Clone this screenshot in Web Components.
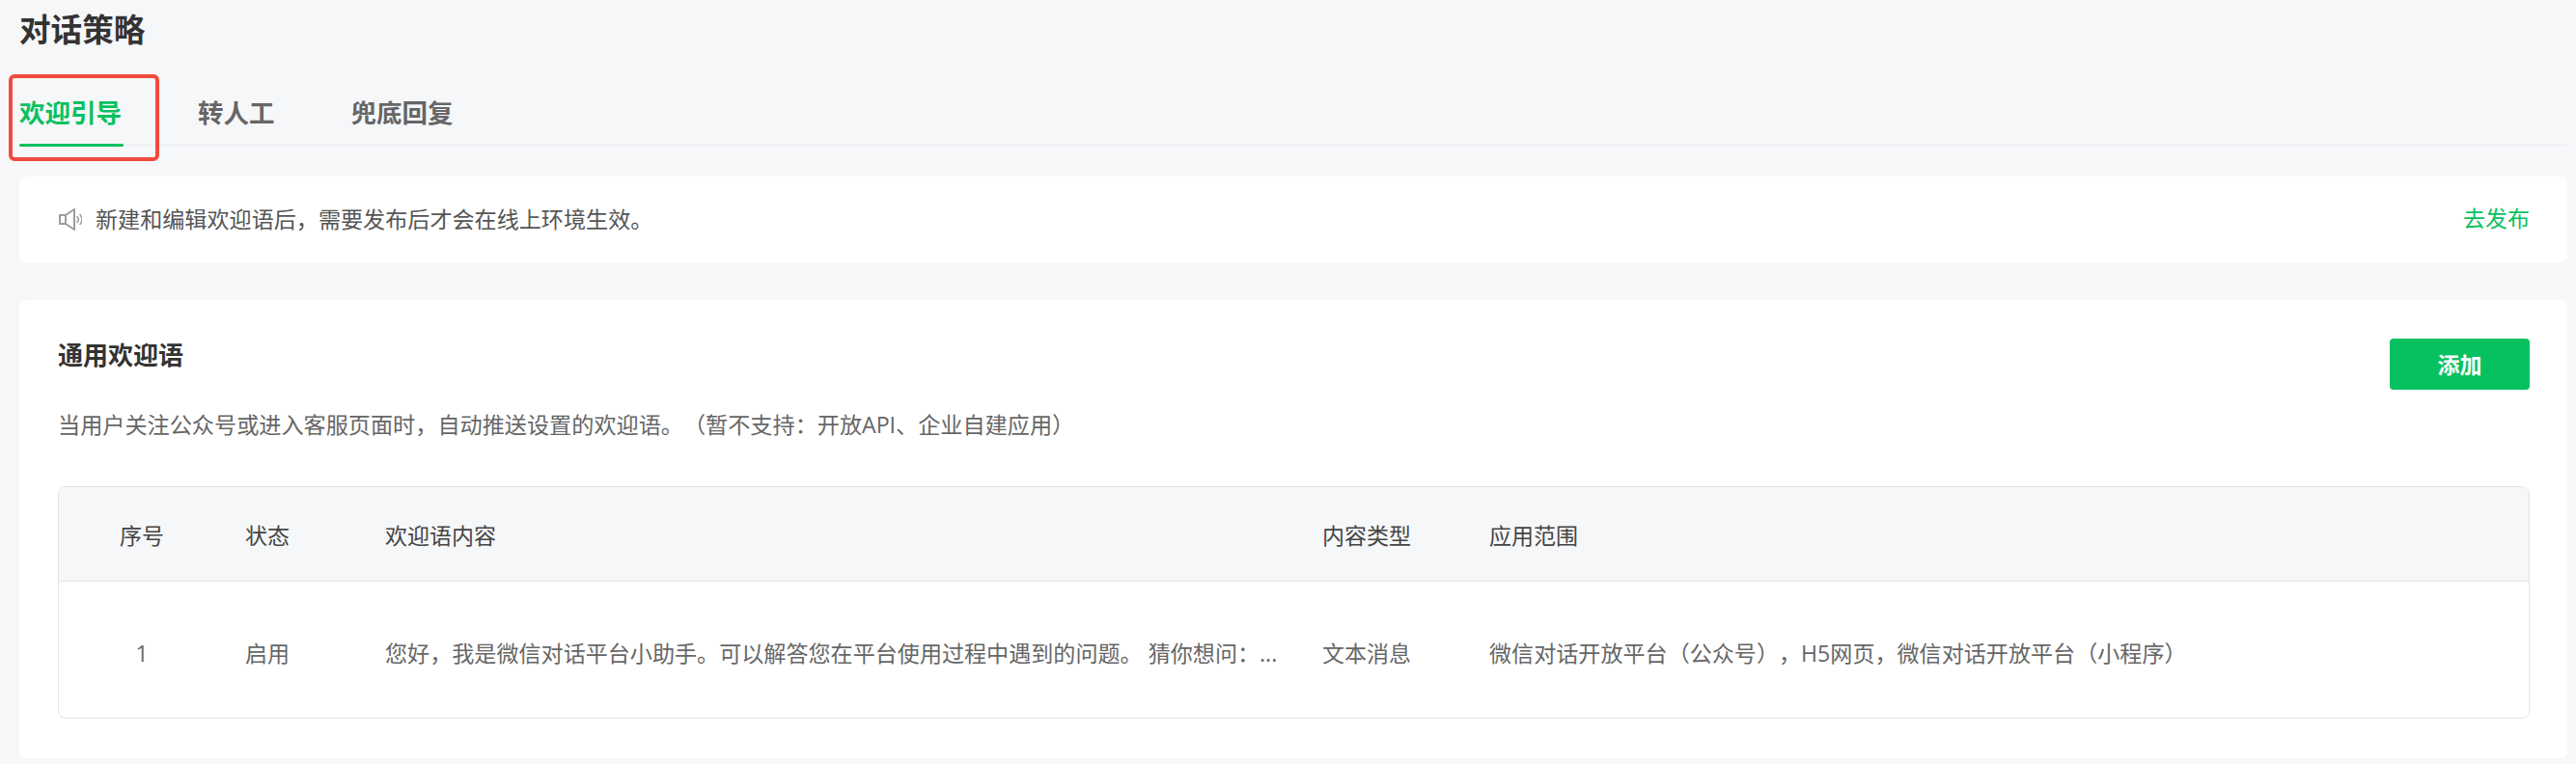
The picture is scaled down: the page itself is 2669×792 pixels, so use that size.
<!DOCTYPE html>
<html lang="zh-CN"><head><meta charset="utf-8"><title>对话策略</title>
<style>
html,body{margin:0;padding:0;background:#f6f7f9;}
body{font-family:"Open Sans","Noto Sans CJK SC","Liberation Sans",sans-serif;color:#333;text-spacing-trim:space-all;}
</style></head><body>
<strategy-page>
  <page-tabs>
    <tab-item active>欢迎引导</tab-item>
    <tab-item>转人工</tab-item>
    <tab-item>兜底回复</tab-item>
  </page-tabs>
  <notice-bar action="去发布">新建和编辑欢迎语后，需要发布后才会在线上环境生效。</notice-bar>
  <welcome-card heading="通用欢迎语" desc="当用户关注公众号或进入客服页面时，自动推送设置的欢迎语。（暂不支持：开放API、企业自建应用）" button="添加">
    <welcome-table></welcome-table>
  </welcome-card>
</strategy-page>
<script>
function def(name, html){
  customElements.define(name, class extends HTMLElement{
    connectedCallback(){
      if(this.shadowRoot) return;
      const r=this.attachShadow({mode:'open'});
      r.innerHTML=typeof html==='function'?html(this):html;
    }
  });
}
def('strategy-page',`<style>
:host{display:block;box-sizing:border-box;height:792px;padding:0 9px 0 20px;overflow:hidden}
h1{margin:0;height:64px;line-height:62px;font-size:32.6px;font-weight:700;color:#333}
</style><h1>对话策略</h1><slot></slot>`);
def('page-tabs',`<style>
:host{display:flex;position:relative;height:87px;gap:79px;border-bottom:1px solid #e7e8eb;box-sizing:border-box}
.mark{position:absolute;left:-11px;top:13px;width:156px;height:90px;box-sizing:border-box;border:4px solid #f04b3e;border-radius:6px;pointer-events:none}
</style><slot></slot><div class="mark"></div>`);
def('tab-item',`<style>
:host{display:block;position:relative;height:87px;box-sizing:border-box;padding-top:34px;line-height:39px;font-size:26.5px;font-weight:700;color:#666;white-space:nowrap}
:host([active]){color:#07c160}
:host([active])::after{content:"";position:absolute;left:0;right:-2px;bottom:-1px;height:3px;border-radius:2px;background:#07c160}
</style><slot></slot>`);
def('notice-bar',h=>`<style>
:host{display:flex;align-items:center;box-sizing:border-box;height:89px;margin-top:32px;padding:0 39px 0 41px;background:#fff;border-radius:8px;font-size:23.1px;color:#555}
svg{flex:none;width:24px;height:23px;margin-right:14px}
.t{flex:1;white-space:nowrap;line-height:34px;margin-top:-2px}
a{color:#07c160;font-size:23px;text-decoration:none;line-height:34px;margin-top:-3px}
</style><svg viewBox="0 0 24 23" fill="none" stroke="#9a9ca1"><path d="M1 7h6v9H1zM7 7l9-6v21l-9-6" stroke-width="2" stroke-linejoin="round"/><path d="M19 8.500a4.500 4.500 0 0 1 0 6M22 6.500a8 8 0 0 1 0 10" stroke-width="1.500" stroke-linecap="round"/></svg><span class="t"><slot></slot></span><a href="#">${h.getAttribute('action')}</a>`);
def('welcome-card',h=>`<style>
:host{display:block;box-sizing:border-box;height:475px;margin-top:39px;padding:40px 39px 0 40px;background:#fff;border-radius:8px}
.top{display:flex;justify-content:space-between;align-items:flex-start;height:53px}
h2{margin:0;font-size:26px;line-height:53px;height:53px;font-weight:700;color:#333;margin-top:-9px}
button{width:145px;height:53px;border:0;border-radius:4px;background:#07c160;color:#fff;font:700 23px "Noto Sans CJK SC",sans-serif;padding:0 0 2px}
p{margin:19px 0 47px;font-size:23.15px;line-height:34px;color:#666;white-space:nowrap}
</style><div class="top"><h2>${h.getAttribute('heading')}</h2><button>${h.getAttribute('button')}</button></div><p>${h.getAttribute('desc')}</p><slot></slot>`);
def('welcome-table',`<style>
:host{display:block;box-sizing:border-box;height:241px;border:1.500px solid #e2e3e8;border-radius:8px;overflow:hidden;font-size:23px}
.row{display:grid;grid-template-columns:172px 145px 971px 173px 1fr;align-items:center}
.head{height:98px;background:#f6f7f9;border-bottom:1.500px solid #e2e3e8;color:#444;padding-top:3px;box-sizing:border-box}
.body{height:141px;color:#666;padding-top:6px;box-sizing:border-box}
.row>div{padding:0 21px;white-space:nowrap;line-height:34px;min-width:0}
.row>div:first-child{text-align:center;padding:0}
.msg{font-size:23.08px}
.scope{font-size:23.08px}
</style>
<div class="row head"><div>序号</div><div>状态</div><div>欢迎语内容</div><div>内容类型</div><div>应用范围</div></div>
<div class="row body"><div>1</div><div>启用</div><div class="msg">您好，我是微信对话平台小助手。可以解答您在平台使用过程中遇到的问题。 猜你想问：...</div><div>文本消息</div><div class="scope">微信对话开放平台（公众号），H5网页，微信对话开放平台（小程序）</div></div>`);
</script>
</body></html>
